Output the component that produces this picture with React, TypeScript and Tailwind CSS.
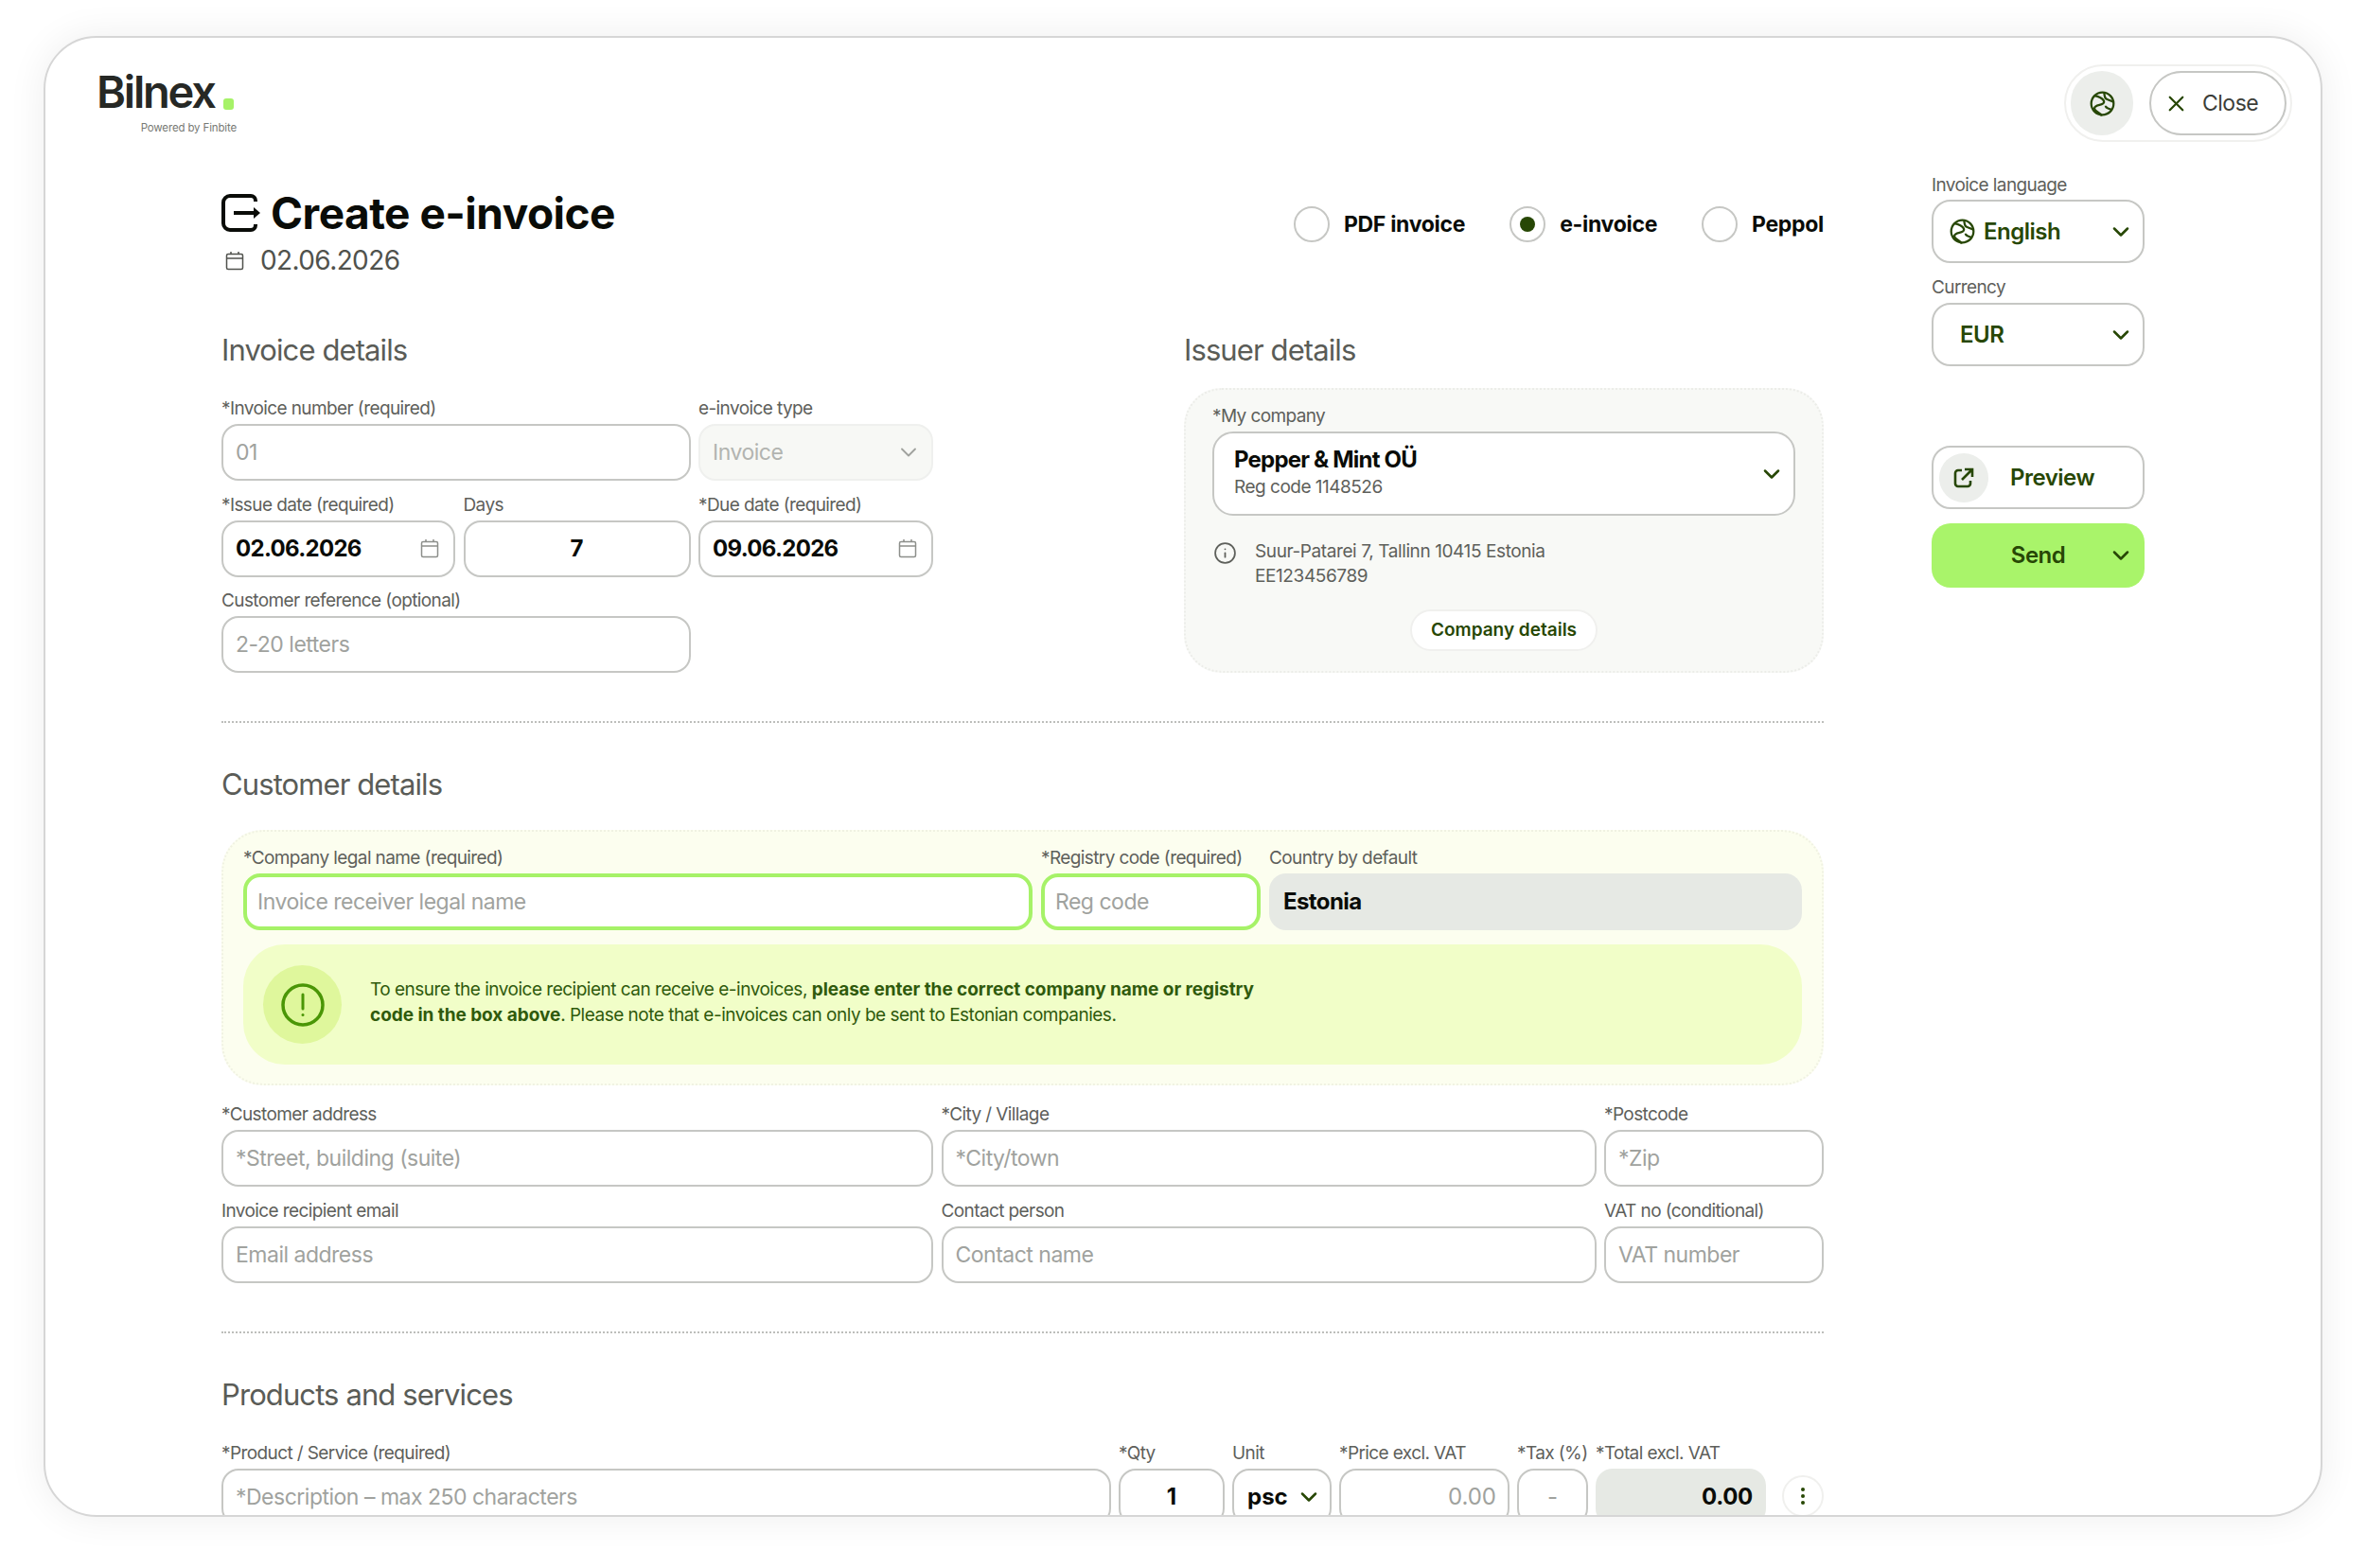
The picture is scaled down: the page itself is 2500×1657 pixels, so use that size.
import { ChevronDown, X, Info } from 'lucide-react';
import type { ReactNode } from 'react';

const GREEN = 'text-[#274705]';

function Globe({ className }: { className: string }) {
  return (
    <svg className={className} viewBox="0 0 24 24" fill="none" stroke="currentColor" strokeWidth={2}>
      <circle cx="12" cy="12" r="10.500" />
      <path d="M4.500 4.500c3 .5 9 2.500 9 6s-9 2-9 6c0 3 5 3 7 7" />
      <path d="M13.500 2c1 3 0 5 3 6s4 2 6 2.500" />
      <path d="M15 14c0 3 3 2 6 4" />
    </svg>
  );
}

function CalendarIcon({ className }: { className: string }) {
  return (
    <svg className={className} viewBox="0 0 20 20" fill="none" stroke="currentColor" strokeWidth={1.5}>
      <rect x="1.500" y="3" width="17" height="16" rx="1.500" />
      <path d="M1.500 7.500h17M6 0.500v3M14 0.500v3" />
    </svg>
  );
}

function Field({ label, className = '', children }: { label: string; className?: string; children: ReactNode }) {
  return (
    <div className={`flex min-w-0 flex-col ${className}`}>
      <label className="mb-[4px] h-[24px] whitespace-nowrap text-[19px] leading-[24px] tracking-[-0.6px] text-[#5e605b]">{label}</label>
      {children}
    </div>
  );
}

function TextInput({ placeholder, green }: { placeholder: string; green?: boolean }) {
  return (
    <input
      readOnly
      placeholder={placeholder}
      className={`h-[60px] w-full rounded-[18px] bg-white text-[23px] tracking-[-0.5px] outline-none placeholder:text-[#a0a29e] ${
        green ? 'border-[4px] border-[#a6f268] px-[11px]' : 'border-2 border-[#c6c7c4] px-[13px]'
      }`}
    />
  );
}

function DateInput({ value }: { value: string }) {
  return (
    <div className="flex h-[60px] items-center justify-between rounded-[18px] border-2 border-[#c6c7c4] bg-white pl-[13px] pr-[15px] text-[24px] font-bold tracking-[-0.7px] text-[#0a0c08]">
      {value}
      <CalendarIcon className="h-[21px] w-[20px] text-[#8d8f8b]" />
    </div>
  );
}

function Radio({ label, checked }: { label: string; checked?: boolean }) {
  return (
    <div className="flex items-center gap-[15px]">
      <span className="flex h-[38px] w-[38px] items-center justify-center rounded-full border-2 border-[#c6c7c4] bg-white">
        {checked && <span className="h-[16px] w-[16px] rounded-full bg-[#274705]" />}
      </span>
      <span className="text-[23px] font-bold tracking-[-0.3px] text-[#0a0c08]">{label}</span>
    </div>
  );
}

function Heading({ children, className = '' }: { children: ReactNode; className?: string }) {
  return <h2 className={`h-[40px] text-[31px] leading-[40px] tracking-[-0.9px] text-[#5a5c57] ${className}`}>{children}</h2>;
}

function Divider({ className = '' }: { className?: string }) {
  return <div className={`border-t-2 border-dotted border-[#bdbebb] ${className}`} />;
}

export default function App() {
  return (
    <div className="h-[1657px] w-full overflow-hidden bg-white pl-[46px] pt-[38px] font-['Inter',sans-serif]">
      <div className="flex h-[1565px] w-[2408px] flex-col overflow-hidden rounded-[56px] border-2 border-[#d6d6d6] bg-white shadow-[0_0_40px_rgba(0,0,0,0.07)]">
        {/* top bar */}
        <header className="flex items-start justify-between pl-[54px] pr-[30px] pt-[28px]">
          <div className="w-[148px] pt-[8px]">
            <div className="flex h-[42px] items-end">
              <span className="text-[47px] font-semibold leading-[42px] tracking-[-2.200px] text-[#262825]">Bilnex</span>
              <span className="mb-[2px] ml-[9px] h-[12px] w-[11px] rounded-[3px] bg-[#a6f268]" />
            </div>
            <div className="mt-[10px] text-right text-[11.500px] leading-[14px] tracking-[-0.15px] text-[#777974]">Powered by Finbite</div>
          </div>
          <div className="flex h-[82px] items-center gap-[17px] rounded-full border-2 border-[#f0f0ee] pl-[5px] pr-[4px]">
            <span className={`flex h-[68px] w-[66px] items-center justify-center rounded-full bg-[#eceeeb] ${GREEN}`}>
              <Globe className="h-[27px] w-[27px]" />
            </span>
            <button className="flex h-[68px] w-[145px] items-center gap-[14px] rounded-full border-2 border-[#c6c7c4] pl-[13px] text-[23px] tracking-[-0.5px] text-[#3c3e39]">
              <X className={`h-[27px] w-[27px] ${GREEN}`} strokeWidth={2} />
              Close
            </button>
          </div>
        </header>

        <div className="mt-[36px] flex pl-[186px]">
          <main className="w-[1693px] pt-[19px]">
            <div className="flex items-start justify-between">
              <div>
                <div className="flex items-center gap-[10px]">
                  <svg className="h-[40px] w-[42px] text-[#0a0c08]" viewBox="0 0 42 40" fill="none" stroke="currentColor" strokeWidth={4}>
                    <path d="M36 8V7a5 5 0 0 0-5-5H9a7 7 0 0 0-7 7v22a7 7 0 0 0 7 7h22a5 5 0 0 0 5-5v-1" />
                    <path d="M13 20h24" />
                    <path d="M34 14l7 6-7 6z" fill="currentColor" stroke="none" />
                  </svg>
                  <h1 className="text-[46px] font-bold leading-[40px] tracking-[-0.5px] text-[#0a0c08]">Create e-invoice</h1>
                </div>
                <div className="mt-[18px] flex items-center gap-[17px] text-[28px] leading-[24px] tracking-[-0.6px] text-[#50524d]">
                  <CalendarIcon className="ml-[4px] h-[21px] w-[20px] text-[#50524d]" />
                  02.06.2026
                </div>
              </div>
              <div className="mt-[13px] flex gap-[47px]">
                <Radio label="PDF invoice" />
                <Radio label="e-invoice" checked />
                <Radio label="Peppol" />
              </div>
            </div>

            <div className="mt-[63px] flex items-start justify-between">
              <section className="w-[752px]">
                <Heading>Invoice details</Heading>
                <div className="mt-[30px] grid grid-cols-[247px_240px_248px] gap-x-[8.500px] gap-y-[13.500px]">
                  <Field label="*Invoice number (required)" className="col-span-2">
                    <TextInput placeholder="01" />
                  </Field>
                  <Field label="e-invoice type">
                    <div className="flex h-[60px] items-center justify-between rounded-[18px] border-2 border-[#eff0ee] bg-[#f7f8f5] pl-[13px] pr-[10px] text-[23px] tracking-[-0.5px] text-[#b2b4b0]">
                      Invoice
                      <ChevronDown className="h-[28px] w-[28px] text-[#a0a29e]" strokeWidth={1.6} />
                    </div>
                  </Field>
                  <Field label="*Issue date (required)">
                    <DateInput value="02.06.2026" />
                  </Field>
                  <Field label="Days">
                    <div className="flex h-[60px] items-center justify-center rounded-[18px] border-2 border-[#c6c7c4] bg-white text-[24px] font-bold text-[#0a0c08]">7</div>
                  </Field>
                  <Field label="*Due date (required)">
                    <DateInput value="09.06.2026" />
                  </Field>
                  <Field label="Customer reference (optional)" className="col-span-2">
                    <TextInput placeholder="2-20 letters" />
                  </Field>
                </div>
              </section>

              <section className="w-[676px]">
                <Heading>Issuer details</Heading>
                <div className="mt-[20px] flex h-[301px] flex-col rounded-[40px] border-2 border-dotted border-[#ecede9] bg-[#f8f9f6] px-[28px] pt-[16px]">
                  <Field label="*My company">
                    <div className="flex h-[89px] items-center justify-between rounded-[22px] border-2 border-[#c6c7c4] bg-white pl-[21px] pr-[9px]">
                      <div className="-mt-[1px]">
                        <div className="text-[24px] font-bold leading-[30px] tracking-[-0.8px] text-[#0a0c08]">Pepper &amp; Mint OÜ</div>
                        <div className="text-[19px] leading-[28px] tracking-[-0.5px] text-[#5e605b]">Reg code 1148526</div>
                      </div>
                      <ChevronDown className={`h-[28px] w-[28px] ${GREEN}`} strokeWidth={2.2} />
                    </div>
                  </Field>
                  <div className="mt-[25px] flex gap-[19px] text-[19px] leading-[26px] tracking-[-0.4px] text-[#5e605b]">
                    <Info className="ml-[1px] mt-[2px] h-[25px] w-[25px] shrink-0" strokeWidth={1.7} />
                    <div>
                      Suur-Patarei 7, Tallinn 10415 Estonia
                      <br />
                      EE123456789
                    </div>
                  </div>
                  <button className={`mx-auto mt-[22px] h-[44px] w-[198px] rounded-full border-2 border-[#f0f0ee] bg-white text-[19px] font-semibold tracking-[0px] ${GREEN}`}>
                    Company details
                  </button>
                </div>
              </section>
            </div>

            <Divider className="mt-[51px]" />

            <Heading className="mt-[45px]">Customer details</Heading>
            <div className="mt-[28px] h-[270px] rounded-[44px] border-2 border-dotted border-[#f0f2e2] bg-[#fcfeef] px-[21px] pt-[16px]">
              <div className="flex gap-[9px]">
                <Field label="*Company legal name (required)" className="w-[834px]">
                  <TextInput placeholder="Invoice receiver legal name" green />
                </Field>
                <Field label="*Registry code (required)" className="w-[232px]">
                  <TextInput placeholder="Reg code" green />
                </Field>
                <Field label="Country by default" className="flex-1">
                  <div className="flex h-[60px] items-center rounded-[18px] bg-[#e6e9e4] px-[15px] text-[24px] font-bold tracking-[-0.6px] text-[#0a0c08]">Estonia</div>
                </Field>
              </div>
              <div className="mt-[15px] flex h-[127px] items-center gap-[30px] rounded-[44px] bg-[#f1fec8] pl-[21px]">
                <span className="flex h-[83px] w-[83px] items-center justify-center rounded-full bg-[#dff79c]">
                  <svg className="h-[46px] w-[46px] text-[#4a9606]" viewBox="0 0 46 46" fill="none" stroke="currentColor" strokeWidth={3.500}>
                    <circle cx="23" cy="23" r="21" />
                    <path d="M23 12v15" strokeLinecap="round" strokeWidth={3} />
                    <circle cx="23" cy="33.500" r="1.500" fill="currentColor" stroke="none" />
                  </svg>
                </span>
                <p className="mb-[5px] text-[19px] leading-[27px] tracking-[-0.5px] text-[#2f5a0c]">
                  To ensure the invoice recipient can receive e-invoices, <b className="font-bold tracking-[-0.05px]">please enter the correct company name or registry</b>
                  <br />
                  <b className="font-bold tracking-[-0.05px]">code in the box above</b>. Please note that e-invoices can only be sent to Estonian companies.
                </p>
              </div>
            </div>

            <div className="mt-[19px] grid grid-cols-[752px_692px_232px] gap-x-[8.500px] gap-y-[13.500px]">
              <Field label="*Customer address">
                <TextInput placeholder="*Street, building (suite)" />
              </Field>
              <Field label="*City / Village">
                <TextInput placeholder="*City/town" />
              </Field>
              <Field label="*Postcode">
                <TextInput placeholder="*Zip" />
              </Field>
              <Field label="Invoice recipient email">
                <TextInput placeholder="Email address" />
              </Field>
              <Field label="Contact person">
                <TextInput placeholder="Contact name" />
              </Field>
              <Field label="VAT no (conditional)">
                <TextInput placeholder="VAT number" />
              </Field>
            </div>

            <Divider className="mt-[51px]" />

            <Heading className="mt-[45px]">Products and services</Heading>
            <div className="mt-[30px] flex items-start gap-[8px]">
              <Field label="*Product / Service (required)" className="w-[940px]">
                <TextInput placeholder="*Description – max 250 characters" />
              </Field>
              <Field label="*Qty" className="w-[112px]">
                <div className="flex h-[60px] items-center justify-center rounded-[18px] border-2 border-[#c6c7c4] text-[24px] font-bold text-[#0a0c08]">1</div>
              </Field>
              <Field label="Unit" className="w-[105px]">
                <div className="flex h-[60px] items-center justify-between rounded-[18px] border-2 border-[#c6c7c4] pl-[14px] pr-[8px] text-[24px] font-bold text-[#0a0c08]">
                  psc
                  <ChevronDown className={`h-[28px] w-[28px] ${GREEN}`} strokeWidth={2.2} />
                </div>
              </Field>
              <Field label="*Price excl. VAT" className="w-[180px]">
                <div className="flex h-[60px] items-center justify-end rounded-[18px] border-2 border-[#c6c7c4] px-[12px] text-[24px] text-[#a0a29e]">0.00</div>
              </Field>
              <Field label="*Tax (%)" className="w-[75px]">
                <div className="flex h-[60px] items-center justify-center rounded-[18px] border-2 border-[#c6c7c4] text-[24px] text-[#a0a29e]">-</div>
              </Field>
              <Field label="*Total excl. VAT" className="w-[180px]">
                <div className="flex h-[60px] items-center justify-end rounded-[18px] bg-[#e6e9e4] px-[14px] text-[24px] font-bold tracking-[-0.3px] text-[#0a0c08]">0.00</div>
              </Field>
              <button className="ml-[9px] mt-[35px] flex h-[44px] w-[44px] flex-col items-center justify-center gap-[3px] rounded-full border-2 border-[#f0f0ee]">
                <span className="h-[4px] w-[4px] rounded-full bg-[#274705]" />
                <span className="h-[4px] w-[4px] rounded-full bg-[#274705]" />
                <span className="h-[4px] w-[4px] rounded-full bg-[#274705]" />
              </button>
            </div>
          </main>

          <aside className="ml-[114px] w-[225px]">
            <label className="block h-[24px] text-[19px] leading-[20px] tracking-[-0.6px] text-[#5e605b]">Invoice language</label>
            <div className={`mt-[1px] flex h-[67px] items-center justify-between rounded-[20px] border-2 border-[#c6c7c4] pl-[17px] pr-[9px] text-[24px] font-semibold tracking-[-0.5px] ${GREEN}`}>
              <span className="flex items-center gap-[9px]">
                <Globe className="h-[27px] w-[27px]" />
                English
              </span>
              <ChevronDown className="h-[28px] w-[28px]" strokeWidth={2.2} />
            </div>
            <label className="mt-[14px] block h-[24px] text-[19px] leading-[24px] tracking-[-0.6px] text-[#5e605b]">Currency</label>
            <div className={`mt-[4px] flex h-[67px] items-center justify-between rounded-[20px] border-2 border-[#c6c7c4] pl-[28px] pr-[9px] text-[24px] font-semibold tracking-[-0.5px] ${GREEN}`}>
              EUR
              <ChevronDown className="h-[28px] w-[28px]" strokeWidth={2.2} />
            </div>
            <button className={`mt-[84px] flex h-[67px] w-full items-center gap-[23px] rounded-[20px] border-2 border-[#c6c7c4] pl-[6px] text-[24px] font-semibold tracking-[-0.5px] ${GREEN}`}>
              <span className="flex h-[52px] w-[52px] items-center justify-center rounded-full bg-[#eceeeb]">
                <svg className="h-[22px] w-[22px]" viewBox="0 0 22 22" fill="none" stroke="currentColor" strokeWidth={2.600}>
                  <path d="M9 3H5a3 3 0 0 0-3 3v11a3 3 0 0 0 3 3h10a3 3 0 0 0 3-3v-3" />
                  <path d="M9 13L19 3M12 2h8v8" />
                </svg>
              </span>
              Preview
            </button>
            <button className={`relative mt-[15px] flex h-[68px] w-full items-center justify-center rounded-[20px] bg-[#a9f46a] text-[24px] font-semibold tracking-[-0.5px] ${GREEN}`}>
              Send
              <ChevronDown className="absolute right-[11px] h-[28px] w-[28px]" strokeWidth={2.2} />
            </button>
          </aside>
        </div>
      </div>
    </div>
  );
}
